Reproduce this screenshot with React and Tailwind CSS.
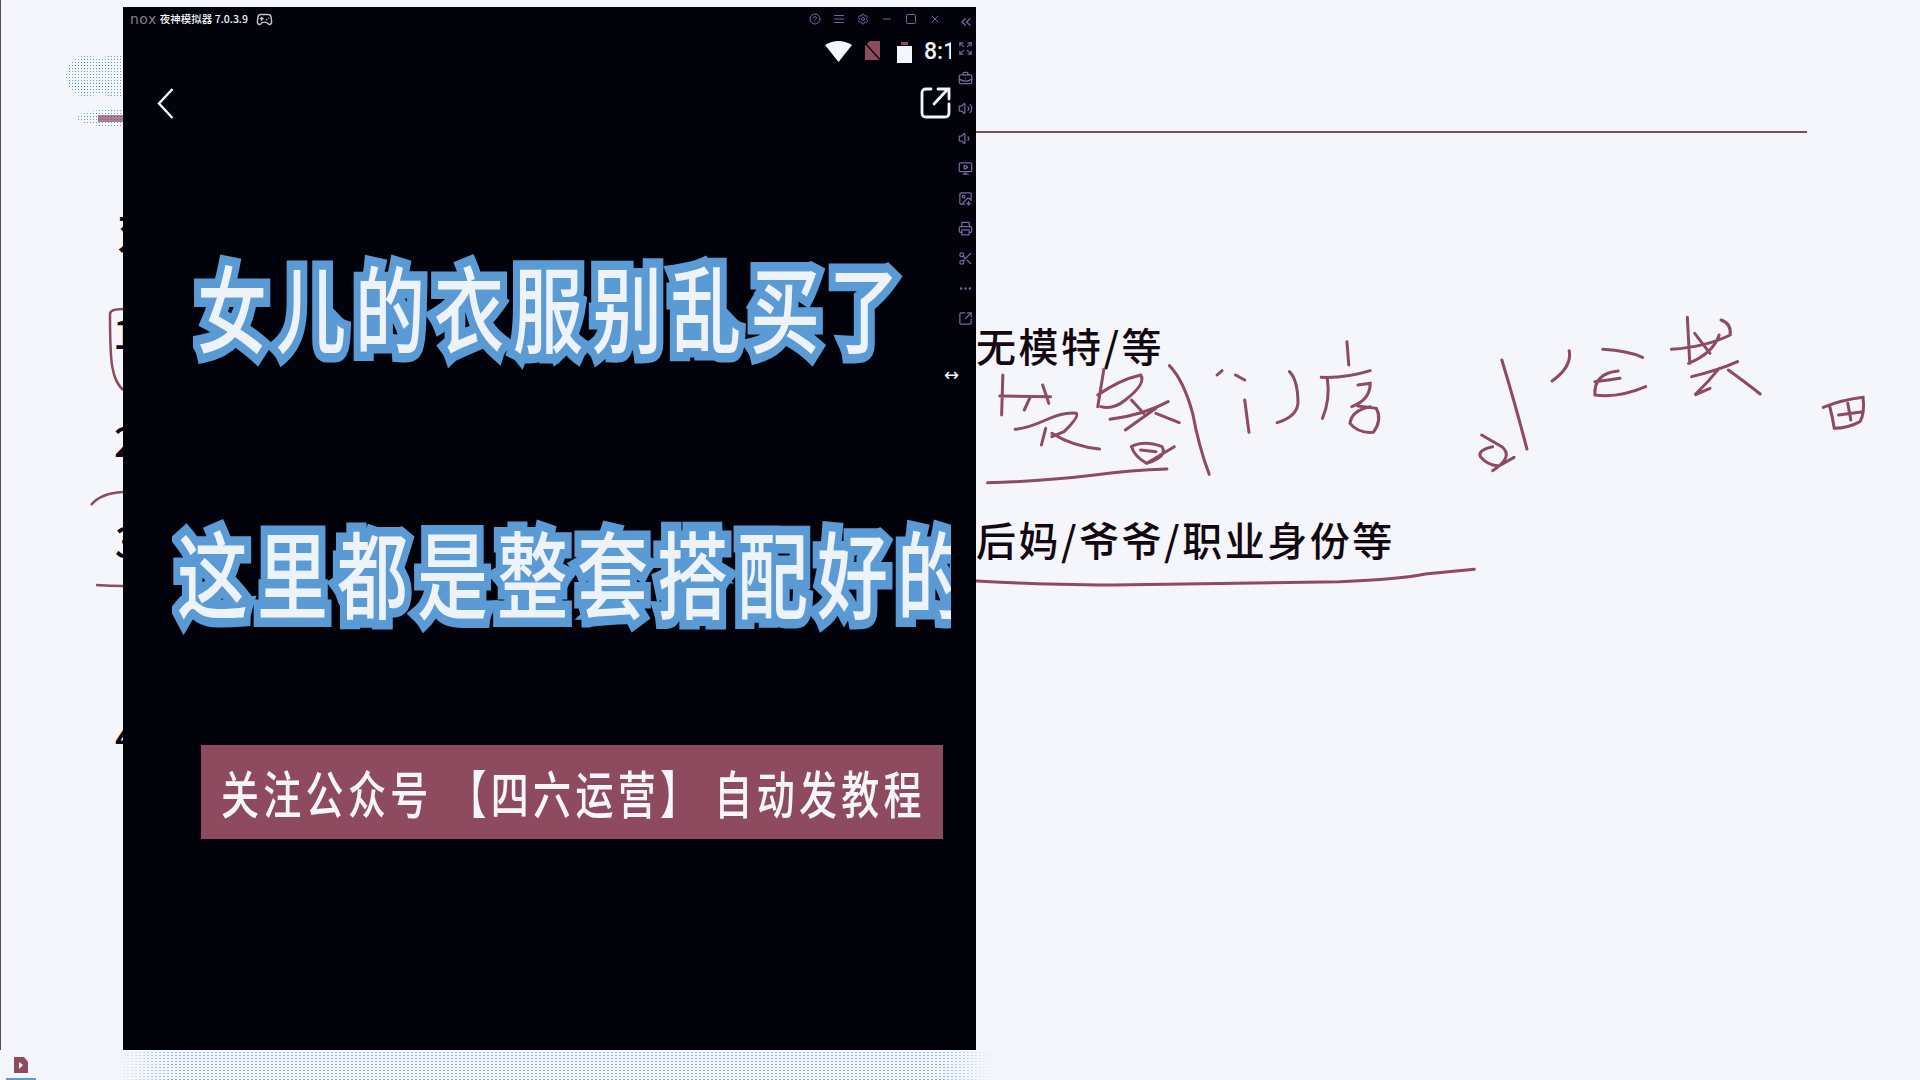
import React from 'react';
import {
  CircleHelp,
  AlignJustify,
  Settings,
  Minus,
  Square,
  X,
  ChevronsLeft,
  Expand,
  BriefcaseBusiness,
  Volume2,
  Volume1,
  MonitorPlay,
  ImageDown,
  Printer,
  Scissors,
  Ellipsis,
  SquareArrowOutUpRight,
  Gamepad2,
} from 'lucide-react';

const CJK = "font-['Noto_Sans_CJK_SC','Noto_Sans',sans-serif]";

const titleIcons = [CircleHelp, AlignJustify, Settings, Minus, Square, X];
const railIcons = [
  Expand,
  BriefcaseBusiness,
  Volume2,
  Volume1,
  MonitorPlay,
  ImageDown,
  Printer,
  Scissors,
  Ellipsis,
  SquareArrowOutUpRight,
];

// pen strokes on the slide, traced from the reference
const inkStrokes = [
  'M70 225 L68 345 M65 288 L148 290 M115 290 L105 330 M135 255 L145 310',
  'M90 388 Q110 385 140 360 Q170 335 190 340 Q195 350 170 395 L150 410 M140 385 L133 435 M150 400 Q185 440 228 447',
  'M235 208 L225 320 M225 285 Q260 240 295 225 Q305 250 270 300 Q250 330 230 320 M245 358 Q300 345 340 305 M320 325 L270 390 M320 340 L358 368 M280 300 L300 340',
  'M280 440 Q300 420 330 440 Q340 470 305 490 Q285 470 280 440 M350 440 L305 490 M295 450 L320 455',
  'M342 197 Q365 240 380 340 Q390 440 407 523',
  'M45 548 Q130 545 220 525 Q280 510 338 507',
  'M420 225 L428 212 M450 225 L465 240 M465 300 L472 397 M538 215 Q552 240 552 310 Q550 350 518 368',
  'M632 125 L635 195 M590 232 Q630 235 670 212 M600 235 Q605 300 592 355 M650 255 L670 250 Q670 300 640 320 M670 320 Q640 330 637 370 Q650 400 675 397 Q690 360 680 325 L650 318',
  'M885 180 Q905 300 926 447 M995 152 Q1000 200 967 243',
  'M852 405 L885 440 Q905 470 870 512 M870 440 Q845 450 850 470 Q860 495 880 498 L905 472',
  'M1050 148 Q1090 152 1115 172 M1075 213 Q1035 220 1037 285 Q1075 295 1120 260 M1037 245 Q1060 240 1078 235',
  'M1188 52 L1192 190 M1162 148 Q1220 140 1258 105 Q1260 70 1243 60 M1240 105 Q1230 160 1190 190 M1200 100 L1225 160',
  'M1195 230 Q1240 210 1270 185 M1240 205 Q1220 250 1200 285 L1225 265 M1255 210 Q1285 250 1307 282',
  'M1410 322 Q1440 300 1475 292 Q1478 340 1470 365 Q1450 385 1428 385 Q1425 350 1420 315 M1435 345 Q1455 340 1475 335 M1450 310 L1455 360',
  'M27 843 Q100 852 250 855 Q450 850 620 845 Q720 838 760 822 L840 808',
];

const Slide = () => (
  <>
    {/* what is left of the slide behind the emulator */}
    <svg className="absolute left-[60px] top-[50px]" width="70" height="85" viewBox="0 0 70 85">
      <defs>
        <pattern id="dots" width="3" height="3" patternUnits="userSpaceOnUse">
          <rect width="1" height="1" fill="#5b9bd5" />
        </pattern>
      </defs>
      <ellipse cx="26" cy="26" rx="20" ry="21" fill="url(#dots)" />
      <ellipse cx="55" cy="26" rx="27" ry="21" fill="url(#dots)" />
      <ellipse cx="55" cy="68" rx="38" ry="9" fill="url(#dots)" />
      <rect x="38" y="65" width="25" height="7" fill="#8e4a5f" opacity="0.7" />
    </svg>
    <div className={`absolute left-[117px] top-[200px] text-[44px] leading-[60px] font-medium text-[#140810] ${CJK}`}>对</div>
    <div className={`absolute left-[113px] top-[312px] text-[40px] leading-[40px] font-medium text-[#140810] ${CJK}`}>1</div>
    <div className={`absolute left-[114px] top-[420px] text-[40px] leading-[40px] font-medium text-[#140810] ${CJK}`}>2</div>
    <div className={`absolute left-[115px] top-[520px] text-[40px] leading-[40px] font-medium text-[#140810] ${CJK}`}>3</div>
    <div className={`absolute left-[115px] top-[715px] text-[40px] leading-[40px] font-medium text-[#140810] ${CJK}`}>4</div>
    <svg className="absolute left-[85px] top-[300px]" width="40" height="300" viewBox="0 0 40 300" fill="none" stroke="#8e4a5f" strokeWidth="2.5">
      <path d="M38 9 Q25 9 25 14 Q25 60 28 70 Q30 82 38 90" />
      <path d="M6 205 Q16 193 38 192" />
      <path d="M11 285 Q25 286 38 286" />
    </svg>

    <div className="absolute left-[976px] top-[131px] h-[2px] w-[831px] bg-[#74505f]" />
    <div className={`absolute left-[976px] top-[318px] text-[40px] leading-[54px] font-medium tracking-[2.5px] text-[#140810] whitespace-nowrap ${CJK}`}>
      无模特/等
    </div>
    <div className={`absolute left-[976px] top-[512px] text-[40px] leading-[54px] font-medium tracking-[2.5px] text-[#140810] whitespace-nowrap ${CJK}`}>
      后妈/爷爷/职业身份等
    </div>
    <svg
      className="absolute left-[960px] top-[300px]"
      width="960"
      height="300"
      viewBox="0 0 1568 900"
      preserveAspectRatio="none"
      fill="none"
      stroke="#8e4a5f"
      strokeWidth="3"
      strokeLinecap="round"
    >
      {inkStrokes.map((d) => (
        <path key={d} d={d} vectorEffect="non-scaling-stroke" />
      ))}
    </svg>
  </>
);

const Headline = ({ children, className }) => (
  <div
    className={`whitespace-nowrap leading-[106px] font-medium text-[#eef3fa] scale-y-[1.35] [-webkit-text-stroke:14px_#5b9bd5] [paint-order:stroke_fill] ${CJK} ${className}`}
  >
    {children}
  </div>
);

const EmulatorWindow = () => (
  <div className="absolute left-[123px] top-[7px] flex h-[1043px] w-[853px] flex-col bg-[#02020a]">
    {/* Title bar */}
    <div className="flex h-[24px] shrink-0 items-center pl-[7px] pr-[35px]">
      <span className="font-['DejaVu_Sans',sans-serif] text-[14px] leading-none tracking-[0.5px] text-[#8a7a8a]">nox</span>
      <span className={`ml-[3px] text-[10.5px] leading-none font-medium text-[#f4f6fb] ${CJK}`}>夜神模拟器 7.0.3.9</span>
      <Gamepad2 className="ml-[8px] text-[#c9c0c8]" size={17} strokeWidth={2} />
      <div className="ml-auto flex items-center gap-[12px]">
        {titleIcons.map((Icon, i) => (
          <Icon key={i} className="text-[#7468a0]" size={12} strokeWidth={2} />
        ))}
      </div>
    </div>

    <div className="flex min-h-0 flex-1">
      {/* Android screen */}
      <div className="relative w-[828px] overflow-hidden">
        <div className="flex h-[24px] items-center justify-end gap-[12px] pt-[16px]">
          <svg width="27" height="22" viewBox="0 0 27 22">
            <path d="M0 5 Q13.5 -3 27 5 L13.5 22 Z" fill="#f4f6fb" />
          </svg>
          <svg width="18" height="21" viewBox="0 0 18 21">
            <path d="M1 4 L6 0 H16 V19 H1 Z" fill="#8e4a5f" />
            <path d="M0 1 L18 21" stroke="#02020a" strokeWidth="1.2" />
          </svg>
          <svg className="ml-[3px]" width="15" height="23" viewBox="0 0 15 23">
            <path d="M4 5 V2 H11 V5 Z" fill="#8e4a5f" />
            <path d="M0 6 H15 V23 H0 Z" fill="#f4f6fb" />
          </svg>
          <span className="w-[27px] font-['Roboto',sans-serif] text-[23px] leading-none font-medium text-[#f4f6fb]">8:1</span>
        </div>

        {/* App toolbar */}
        <div className="mt-[32px] flex h-[32px] items-center justify-between pl-[34px]">
          <svg width="17" height="31" viewBox="0 0 17 31" fill="none" stroke="#f4f6fb" strokeWidth="2.4">
            <path d="M15.5 1 L2 15.5 L15.5 30" />
          </svg>
          <svg width="31" height="32" viewBox="0 0 31 32" fill="none" stroke="#f4f6fb" strokeWidth="2.8" strokeLinecap="round">
            <path d="M11 2 H6 Q2 2 2 6 V26 Q2 30 6 30 H25 Q29 30 29 26 V17" />
            <path d="M14 17 L27 3 M18 2 H29 V12" />
          </svg>
        </div>

        <Headline className="mt-[133px] pl-[74px] text-[70px] tracking-[9px]">女儿的衣服别乱买了</Headline>
        <Headline className="mt-[159px] pl-[54px] text-[71px] tracking-[9px]">这里都是整套搭配好的</Headline>

        {/* Follow banner */}
        <div className={`mt-[122px] ml-[78px] flex h-[94px] w-[742px] items-center whitespace-nowrap bg-[#8e4a5f] pl-[20px] text-[38px] leading-none tracking-[4.3px] font-medium text-[#f4f6fb] ${CJK}`}>
          <span className="scale-y-[1.35]">关注公众号</span>
          <span className="ml-[16px] scale-y-[1.35]">【四六运营】</span>
          <span className="ml-[12px] scale-y-[1.35]">自动发教程</span>
        </div>
      </div>

      {/* Emulator tool rail */}
      <div className="flex flex-1 flex-col items-center gap-[15px] pl-[4px]">
        <ChevronsLeft className="mb-[-4px] mt-[-17px] text-[#7468a0]" size={16} strokeWidth={2} />
        {railIcons.map((Icon, i) => (
          <Icon key={i} className="text-[#7468a0]" size={15} strokeWidth={2} />
        ))}
      </div>
    </div>

    <span className="absolute left-[821px] top-[359px] font-['DejaVu_Sans',sans-serif] text-[18px] leading-none text-[#f4f6fb]">↔</span>
  </div>
);

export default function App() {
  return (
    <div className="relative h-screen w-screen overflow-hidden bg-[#f4f6fb]">
      <div className="absolute left-0 top-0 h-[1050px] w-px bg-[#55505a]" />
      <Slide />
      <EmulatorWindow />

      {/* dither strip under the window */}
      <div className="absolute left-[118px] top-[1051px] h-[29px] w-[875px] bg-[radial-gradient(#5b9bd5_0.7px,transparent_0.8px)] bg-[length:4px_3px] opacity-70 [mask-image:linear-gradient(90deg,transparent,black_6%,black_94%,transparent)]" />
      <svg className="absolute left-[14px] top-[1057px]" width="14" height="16" viewBox="0 0 14 16">
        <path d="M0 0 H10 L14 5 V16 H0 Z" fill="#8e4a5f" />
        <path d="M5 5 L9 8 L5 12 Z" fill="#f4f6fb" />
      </svg>
      <div className="absolute left-[6px] top-[1078px] h-[2px] w-[30px] bg-[#5b9bd5]" />
    </div>
  );
}
